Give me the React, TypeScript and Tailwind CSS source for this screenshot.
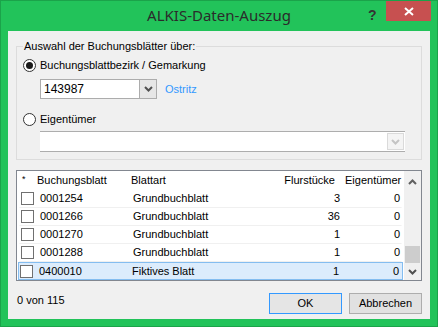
import React from 'react';

const rows = [
  { nr: '0001254', art: 'Grundbuchblatt', fl: 3, ei: 0 },
  { nr: '0001266', art: 'Grundbuchblatt', fl: 36, ei: 0 },
  { nr: '0001270', art: 'Grundbuchblatt', fl: 1, ei: 0 },
  { nr: '0001288', art: 'Grundbuchblatt', fl: 1, ei: 0 },
  { nr: '0400010', art: 'Fiktives Blatt', fl: 1, ei: 0, selected: true },
];

function Chevron({ disabled }: { disabled?: boolean }) {
  return (
    <svg width="9" height="6" viewBox="0 0 9 6">
      <path d="M1 1l3.5 3.5L8 1" fill="none" stroke={disabled ? '#c4c4c4' : '#505050'} strokeWidth={2} />
    </svg>
  );
}

function Radio({ checked }: { checked?: boolean }) {
  return (
    <span className="w-[13px] h-[13px] rounded-full border border-[#333] bg-white flex items-center justify-center shrink-0">
      {checked && <span className="w-[7px] h-[7px] rounded-full bg-[#1a1a1a]" />}
    </span>
  );
}

export default function App() {
  return (
    <div
      className="w-[438px] h-[327px] bg-[#22c35a] border border-[#1ba34a] flex flex-col text-[11px] text-black"
      style={{ fontFamily: '"Liberation Sans", Arial, sans-serif' }}
    >
      {/* title bar */}
      <div className="h-[30px] relative flex items-center justify-center shrink-0">
        <span className="text-[15px] text-[#2b2b2b] mt-[-1px]" style={{ fontFamily: '"Noto Sans", "Liberation Sans", sans-serif' }}>
          ALKIS-Daten-Auszug
        </span>
        <span className="absolute left-[367px] top-[4px] text-[14px] font-bold text-[#333]">?</span>
        <div className="absolute left-[385px] top-0 w-[45px] h-[20px] bg-[#c75050] flex items-center justify-center">
          <svg width="10" height="9" viewBox="0 0 10 9">
            <path d="M1 1l8 7M9 1L1 8" stroke="#fff" strokeWidth={2} />
          </svg>
        </div>
      </div>

      {/* content */}
      <div className="flex-1 mx-[7px] mb-[7px] bg-[#f0f0f0] flex flex-col px-[8px]">
        {/* group box */}
        <div className="relative mt-[15px] h-[114px] border border-[#dcdcdc] flex flex-col pl-[6px]">
          <span className="absolute left-[6px] top-[-8px] bg-[#f0f0f0] px-[1px] leading-[14px]">
            Auswahl der Buchungsblätter über:
          </span>
          <div className="flex items-center gap-[4px] mt-[11px] h-[14px]">
            <Radio checked />
            <span>Buchungsblattbezirk / Gemarkung</span>
          </div>
          <div className="flex items-center mt-[7px] ml-[17px]">
            <div className="w-[117px] h-[20px] bg-white border border-[#acacac] flex items-center">
              <span className="flex-1 pl-[3px] text-[12px]">143987</span>
              <div className="w-[17px] h-[18px] bg-[#e6e6e6] border-l border-[#acacac] flex items-center justify-center">
                <Chevron />
              </div>
            </div>
            <span className="ml-[8px] text-[#3399ff]">Ostritz</span>
          </div>
          <div className="flex items-center gap-[4px] mt-[13px] h-[14px]">
            <Radio />
            <span>Eigentümer</span>
          </div>
          <div className="mt-[5px] ml-[17px] w-[365px] h-[21px] bg-white border-y border-[#adadad] flex items-center justify-end pr-[1px]">
            <div className="w-[17px] h-[17px] border border-[#dadada] bg-[#f4f4f4] flex items-center justify-center">
              <Chevron disabled />
            </div>
          </div>
        </div>

        {/* list */}
        <div className="mt-[10px] h-[111px] border border-[#828790] bg-white flex">
          <div className="flex-1 flex flex-col">
            <div className="h-[19px] flex items-center bg-white">
              <span className="w-[20px] pl-[5px] text-[9px] self-start pt-[2px]">*</span>
              <span className="w-[94px]">Buchungsblatt</span>
              <span className="w-[120px]">Blattart</span>
              <span className="w-[84px] text-right">Flurstücke</span>
              <span className="ml-[10px]">Eigentümer</span>
            </div>
            {rows.map((r) => (
              <div
                key={r.nr}
                className={
                  r.selected
                    ? 'h-[18px] flex items-center bg-[#dcecfc] border border-[#84bdf0] ml-[1px] mr-[1px]'
                    : 'h-[18px] flex items-center border-b border-[#f0f0f0] ml-[2px] mr-[2px] border-x border-x-transparent'
                }
              >
                <span className="w-[18px] pl-[1px] flex items-center">
                  <span className="w-[13px] h-[13px] border border-[#707070] bg-white" />
                </span>
                <span className="w-[94px] pl-[2px]">{r.nr}</span>
                <span className="w-[120px] pl-[1px]">{r.art}</span>
                <span className="w-[88px] text-right">{r.fl}</span>
                <span className="w-[60px] text-right">{r.ei}</span>
              </div>
            ))}
          </div>
          {/* scrollbar */}
          <div className="w-[17px] bg-[#f0f0f0] flex flex-col items-center">
            <div className="h-[17px] flex items-center justify-center mt-[2px]">
              <svg width="9" height="6" viewBox="0 0 9 6">
                <path d="M1 5l3.5-3.5L8 5" fill="none" stroke="#606060" strokeWidth={2} />
              </svg>
            </div>
            <div className="flex-1" />
            <div className="w-[15px] h-[17px] bg-[#cdcdcd]" />
            <div className="h-[17px] flex items-center justify-center">
              <Chevron />
            </div>
          </div>
        </div>

        {/* footer */}
        <div className="mt-[12px] flex items-center">
          <span className="ml-[1px] mt-[-6px]">0 von 115</span>
          <div className="flex-1" />
          <button className="w-[73px] h-[21px] border border-[#3399ff] bg-[#e5e5e5] text-[11px]">OK</button>
          <button className="ml-[7px] w-[73px] h-[21px] border border-[#adadad] bg-[#e1e1e1] text-[11px]">Abbrechen</button>
        </div>
      </div>
    </div>
  );
}
